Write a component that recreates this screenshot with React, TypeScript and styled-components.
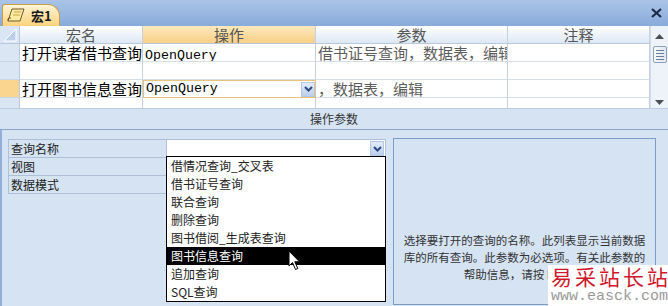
import React from "react";
import styled, { createGlobalStyle } from "styled-components";

const GlobalStyle = createGlobalStyle`
  html, body { margin: 0; padding: 0; }
  body {
    width: 668px;
    height: 306px;
    overflow: hidden;
    background: #d5e3f3;
    font-family: "Noto Sans CJK SC", "Liberation Sans", sans-serif;
  }
`;

const Window = styled.div`
  position: relative;
  width: 668px;
  height: 306px;
  display: flex;
  flex-direction: column;
  overflow: hidden;
`;

const TabStrip = styled.div`
  flex: none;
  height: 26px;
  display: flex;
  align-items: flex-end;
  padding-left: 2px;
  box-sizing: border-box;
  background: linear-gradient(#aac4e8, #88abda);
`;

const Tab = styled.div`
  width: 58px;
  height: 22px;
  box-sizing: border-box;
  display: flex;
  align-items: center;
  gap: 6px;
  padding-left: 4px;
  border: 1px solid #c99c4c;
  border-bottom: none;
  border-radius: 3px 12px 0 0;
  background: linear-gradient(#fff4d4, #fbd37e);
  font-size: 13px;
  font-weight: 700;
  color: #1a1a1a;
`;

const CloseBtn = styled.div`
  margin-left: auto;
  margin-right: 6px;
  align-self: center;
  display: flex;
`;

const GridArea = styled.div`
  flex: none;
  height: 82px;
  display: flex;
  background: #fff;
`;

const Table = styled.div`
  flex: 1;
  display: grid;
  grid-template-columns: 20px 123px 173px 192px 142px;
  grid-auto-rows: 18px;
  overflow: hidden;
`;

const HeaderCell = styled.div<{ $active?: boolean }>`
  box-sizing: border-box;
  border-right: 1px solid #c5d1e1;
  border-bottom: 1px solid #b9c8dc;
  background: ${(p) =>
    p.$active
      ? "linear-gradient(#fde9bd, #f8cf86)"
      : "linear-gradient(#ffffff, #dde8f5)"};
  text-align: center;
  font-size: 15px;
  line-height: 17px;
  color: #555;
`;

const Corner = styled.div`
  box-sizing: border-box;
  border-right: 1px solid #b9c8dc;
  border-bottom: 1px solid #b9c8dc;
  background: #dae6f5;
  display: flex;
  align-items: center;
  justify-content: center;
`;

const Selector = styled.div<{ $current?: boolean }>`
  box-sizing: border-box;
  border-right: 1px solid #b9c8dc;
  border-bottom: 1px solid #c9d6e6;
  background: ${(p) => (p.$current ? "#f9d590" : "#dbe6f4")};
`;

const Cell = styled.div<{ $muted?: boolean }>`
  box-sizing: border-box;
  border-right: 1px solid #c5d1e1;
  border-bottom: 1px solid #d6dee9;
  padding-left: 2px;
  font-size: 15px;
  line-height: 17px;
  white-space: nowrap;
  overflow: hidden;
  color: ${(p) => (p.$muted ? "#5c5c5c" : "#000")};
`;

const Mono = styled.span`
  font-family: "Liberation Mono", monospace;
  font-size: 13.3px;
`;

const FocusCell = styled.div`
  box-sizing: border-box;
  border: 1px solid #e6c27a;
  display: flex;
  align-items: center;
  padding-left: 2px;
  line-height: 16px;
`;

const DropBtn = styled.div`
  margin-left: auto;
  width: 14px;
  height: 15px;
  box-sizing: border-box;
  border: 1px solid #b5c7e3;
  background: linear-gradient(#e2ebf8, #bccfec);
  display: flex;
  align-items: center;
  justify-content: center;
`;

const Scrollbar = styled.div`
  width: 18px;
  flex: none;
  box-sizing: border-box;
  border-left: 1px solid #d3dcea;
  background: #eef3f9;
  display: flex;
  flex-direction: column;
  align-items: center;
  padding-top: 4px;
`;

const ArrowBtn = styled.div`
  height: 12px;
  display: flex;
  align-items: center;
`;

const Thumb = styled.div`
  margin-top: 4px;
  width: 14px;
  height: 17px;
  box-sizing: border-box;
  border: 1px solid #8d9fbb;
  border-radius: 2px;
  background: linear-gradient(90deg, #f7f9fc, #dfe6f0);
  display: flex;
  flex-direction: column;
  justify-content: center;
  align-items: center;
  gap: 2px;
`;

const Grip = styled.div`
  width: 8px;
  height: 1px;
  background: #6c7d96;
`;

const Spacer = styled.div`
  flex: 1;
`;

const ParamBar = styled.div`
  flex: none;
  height: 22px;
  box-sizing: border-box;
  border-top: 1px solid #bccde4;
  border-bottom: 1px solid #8aa5cc;
  text-align: center;
  font-size: 12px;
  line-height: 20px;
  color: #333;
`;

const Lower = styled.div`
  flex: 1;
  display: flex;
  gap: 7px;
  padding: 9px 0 0 6px;
  border-left: 2px solid #91afd8;
`;

const PropGrid = styled.div`
  position: relative;
  width: 377px;
  align-self: flex-start;
  display: grid;
  grid-template-columns: 158px 219px;
  grid-auto-rows: 18px;
  border-top: 1px solid #aebfd7;
  border-left: 1px solid #aebfd7;
`;

const Label = styled.div`
  box-sizing: border-box;
  border-right: 1px solid #aebfd7;
  border-bottom: 1px solid #aebfd7;
  padding-left: 2px;
  font-size: 12px;
  line-height: 17px;
  color: #222;
`;

const Value = styled.div<{ $open?: boolean }>`
  box-sizing: border-box;
  border-right: 1px solid #aebfd7;
  border-bottom: 1px solid #aebfd7;
  background: ${(p) => (p.$open ? "#fff" : "#d5e3f3")};
  display: flex;
  align-items: center;
  justify-content: flex-end;
  padding-right: 1px;
`;

const DropList = styled.div`
  position: absolute;
  left: 157px;
  top: 16px;
  width: 220px;
  box-sizing: border-box;
  border: 1px solid #000;
  background: #fff;
  z-index: 2;
`;

const Item = styled.div<{ $selected?: boolean }>`
  height: 18px;
  padding-left: 4px;
  font-size: 12px;
  line-height: 18px;
  white-space: nowrap;
  background: ${(p) => (p.$selected ? "#000" : "#fff")};
  color: ${(p) => (p.$selected ? "#fff" : "#222")};
`;

const Cursor = styled.svg`
  position: absolute;
  left: 121px;
  top: 93px;
`;

const HelpPanel = styled.div`
  width: 263px;
  margin-top: -1px;
  margin-bottom: 1px;
  box-sizing: border-box;
  border: 1px solid #7d9bc8;
  padding-top: 93px;
  text-align: center;
  font-size: 11.5px;
  line-height: 17px;
  color: #333;
`;

const HelpLine = styled.div`
  white-space: nowrap;
`;

const Watermark = styled.div`
  position: absolute;
  right: 0;
  bottom: 0;
  width: 120px;
  height: 41px;
  background: #fff;
  padding-left: 3px;
  box-sizing: border-box;
  z-index: 3;
`;

const WmTitle = styled.div`
  font-size: 21px;
  line-height: 22px;
  letter-spacing: 3px;
  color: #d0172b;
  white-space: nowrap;
`;

const WmUrl = styled.div`
  margin-top: 3px;
  font-family: "Liberation Mono", monospace;
  font-size: 15px;
  line-height: 14px;
  color: #9a9a9a;
  white-space: nowrap;
`;

const Chevron = () => (
  <svg width="9" height="6" viewBox="0 0 9 6">
    <path d="M1 1 L4.5 4.5 L8 1" fill="none" stroke="#2b4a82" strokeWidth="2" />
  </svg>
);

const queries = [
  "借情况查询_交叉表",
  "借书证号查询",
  "联合查询",
  "删除查询",
  "图书借阅_生成表查询",
  "图书信息查询",
  "追加查询",
  "SQL查询",
];

export default function App() {
  return (
    <Window>
      <GlobalStyle />
      <TabStrip>
        <Tab>
          <svg width="18" height="15" viewBox="0 0 18 15">
            <path d="M5 1 L17 1 L13 13 L1 13 Z" fill="#fbeaa0" stroke="#6b5a2a" />
            <path d="M1 13 Q0 10 3 10 L4 10" fill="none" stroke="#6b5a2a" />
            <path d="M7 4 L14 4 M6 7 L13 7" stroke="#c7a64b" />
          </svg>
          宏1
        </Tab>
        <CloseBtn>
          <svg width="11" height="10" viewBox="0 0 11 10">
            <path d="M1 1 L10 9 M10 1 L1 9" stroke="#1d2b45" strokeWidth="2.2" />
          </svg>
        </CloseBtn>
      </TabStrip>

      <GridArea>
        <Table>
          <Corner>
            <svg width="14" height="14" viewBox="0 0 14 14">
              <path d="M13 1 L13 13 L1 13 Z" fill="#bcd0ec" stroke="#fff" />
            </svg>
          </Corner>
          <HeaderCell>宏名</HeaderCell>
          <HeaderCell $active>操作</HeaderCell>
          <HeaderCell>参数</HeaderCell>
          <HeaderCell>注释</HeaderCell>

          <Selector />
          <Cell>打开读者借书查询</Cell>
          <Cell>
            <Mono>OpenQuery</Mono>
          </Cell>
          <Cell $muted>借书证号查询，数据表，编辑</Cell>
          <Cell />

          <Selector />
          <Cell />
          <Cell />
          <Cell />
          <Cell />

          <Selector $current />
          <Cell>打开图书信息查询</Cell>
          <FocusCell>
            <Mono>OpenQuery</Mono>
            <DropBtn>
              <Chevron />
            </DropBtn>
          </FocusCell>
          <Cell $muted>，数据表，编辑</Cell>
          <Cell />

          <Selector />
          <Cell />
          <Cell />
          <Cell />
          <Cell />
        </Table>
        <Scrollbar>
          <ArrowBtn>
            <svg width="9" height="5" viewBox="0 0 9 5">
              <path d="M0 5 L4.5 0 L9 5 Z" fill="#4a4f57" />
            </svg>
          </ArrowBtn>
          <Thumb>
            <Grip />
            <Grip />
            <Grip />
            <Grip />
          </Thumb>
          <Spacer />
          <ArrowBtn>
            <svg width="9" height="5" viewBox="0 0 9 5">
              <path d="M0 0 L4.5 5 L9 0 Z" fill="#4a4f57" />
            </svg>
          </ArrowBtn>
        </Scrollbar>
      </GridArea>

      <ParamBar>操作参数</ParamBar>

      <Lower>
        <PropGrid>
          <Label>查询名称</Label>
          <Value $open>
            <DropBtn>
              <Chevron />
            </DropBtn>
          </Value>
          <Label>视图</Label>
          <Value />
          <Label>数据模式</Label>
          <Value />
          <DropList>
            {queries.map((q) => (
              <Item key={q} $selected={q === "图书信息查询"}>
                {q}
              </Item>
            ))}
            <Cursor width="13" height="21" viewBox="0 0 13 21">
              <path
                d="M1 1 L1 16 L4.5 12.5 L7.5 19.5 L9.8 18.5 L6.8 11.8 L11.5 11.8 Z"
                fill="#fff"
                stroke="#000"
                strokeWidth="1"
              />
            </Cursor>
          </DropList>
        </PropGrid>
        <HelpPanel>
          <HelpLine>选择要打开的查询的名称。此列表显示当前数据</HelpLine>
          <HelpLine>库的所有查询。此参数为必选项。有关此参数的</HelpLine>
          <HelpLine>帮助信息，请按 F1 键。</HelpLine>
        </HelpPanel>
      </Lower>

      <Watermark>
        <WmTitle>易采站长站</WmTitle>
        <WmUrl>www.easck.com</WmUrl>
      </Watermark>
    </Window>
  );
}
